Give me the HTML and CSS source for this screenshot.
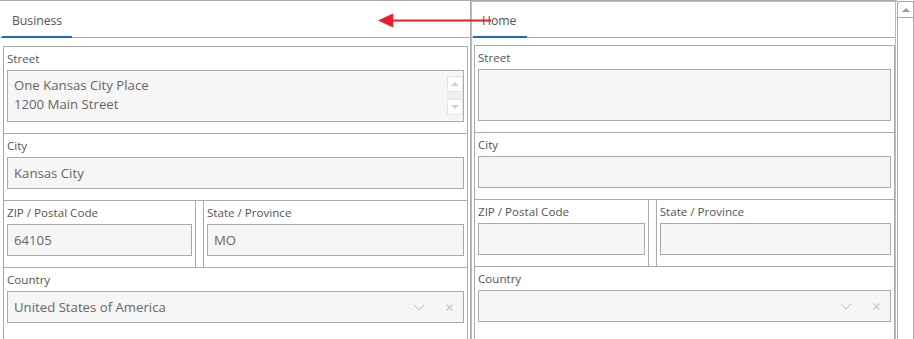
FILE: index.html
```html
<!DOCTYPE html>
<html lang="en">
<head>
    <meta charset="UTF-8">
    <meta name="viewport" content="width=device-width, initial-scale=1.0">
    <title>Address</title>
    <link rel="stylesheet" href="styles.css">
</head>
<body>
    <div class="editor">
        <div class="pane pane-left">
            <div class="tabs">
                <div class="tab">Business</div>
            </div>
            <div class="fields">
                <div class="field">
                    <div class="label">Street</div>
                    <div class="input textarea">
                        <div class="ta-text">One Kansas City Place<br>1200 Main Street</div>
                        <div class="spin">
                            <span class="spin-btn"><span class="tri up"></span></span>
                            <span class="spin-btn"><span class="tri down"></span></span>
                        </div>
                    </div>
                </div>
                <div class="field">
                    <div class="label">City</div>
                    <div class="input">Kansas City</div>
                </div>
                <div class="row">
                    <div class="field">
                        <div class="label">ZIP / Postal Code</div>
                        <div class="input">64105</div>
                    </div>
                    <div class="field">
                        <div class="label">State / Province</div>
                        <div class="input">MO</div>
                    </div>
                </div>
                <div class="field field-last">
                    <div class="label">Country</div>
                    <div class="input select">
                        <span class="select-value">United States of America</span>
                        <svg class="chevron" width="12" height="7" viewBox="0 0 12 7"><polyline points="0.5,0.5 6,6 11.5,0.5" fill="none" stroke="#bdbdbd" stroke-width="1"/></svg>
                        <svg class="clear" width="7" height="7" viewBox="0 0 7 7"><path d="M0.5 0.5 L6.5 6.5 M6.5 0.5 L0.5 6.5" stroke="#c4c4c4" stroke-width="1.2"/></svg>
                    </div>
                </div>
            </div>
        </div>

        <div class="pane pane-right">
            <div class="focus">
                <div class="tabs tabs-right">
                    <div class="tab tab-right">Home</div>
                </div>
                <div class="fields fields-right">
                    <div class="field">
                        <div class="label">Street</div>
                        <div class="input textarea"></div>
                    </div>
                    <div class="field">
                        <div class="label">City</div>
                        <div class="input"></div>
                    </div>
                    <div class="row">
                        <div class="field">
                            <div class="label">ZIP / Postal Code</div>
                            <div class="input"></div>
                        </div>
                        <div class="field">
                            <div class="label">State / Province</div>
                            <div class="input"></div>
                        </div>
                    </div>
                    <div class="field field-last">
                        <div class="label">Country</div>
                        <div class="input select">
                            <span class="select-value"></span>
                            <svg class="chevron" width="12" height="7" viewBox="0 0 12 7"><polyline points="0.5,0.5 6,6 11.5,0.5" fill="none" stroke="#bdbdbd" stroke-width="1"/></svg>
                            <svg class="clear" width="7" height="7" viewBox="0 0 7 7"><path d="M0.5 0.5 L6.5 6.5 M6.5 0.5 L0.5 6.5" stroke="#c4c4c4" stroke-width="1.2"/></svg>
                        </div>
                    </div>
                </div>
            </div>
        </div>

        <div class="scrollbar">
            <div class="sb-btn"><span class="tri up dark"></span></div>
        </div>

        <!-- annotation arrow drawn over the tabs -->
        <svg class="arrow" width="116" height="16" viewBox="0 0 116 16">
            <line x1="12" y1="7.5" x2="113" y2="7.5" stroke="#ec1c24" stroke-width="2"/>
            <polygon points="0,7.5 15,0.5 15,14.5" fill="#ec1c24"/>
        </svg>
    </div>
</body>
</html>
```

FILE: styles.css
```css
html, body {
    margin: 0;
    height: 339px;
    overflow: hidden;
    background: #fff;
}
body {
    font-family: "Open Sans", "Noto Sans", Arial, sans-serif;
    color: #555;
}
.editor {
    position: relative;
    display: flex;
    height: 420px;
}
.pane {
    border-top: 1px solid #aaa;
    box-sizing: border-box;
}
.pane-left {
    width: 470px;
}
.pane-right {
    width: 427px;
    border-left: 1px solid #aaa;
}
.focus {
    height: 100%;
    margin-right: 1px;
    border: 1px solid #86cdee;
    border-bottom: 0;
    box-sizing: border-box;
}
.tabs {
    display: flex;
    height: 36px;
    border-bottom: 1px solid #aaa;
}
.tabs-right {
    height: 35px;
}
.tab {
    box-sizing: border-box;
    height: 37px;
    margin: 0 0 -1px 2px;
    padding: 11px 10px 0 10px;
    border-bottom: 2px solid #1c6dc2;
    font-size: 12.2px;
    line-height: 18px;
    color: #555;
}
.tab-right {
    height: 36px;
    margin-left: 1px;
    padding: 10px 11px 0 9px;
}
.fields {
    margin: 8px 2px 0 3px;
}
.fields-right {
    margin: 7px 0 0 2px;
}
.fields > * + * {
    margin-top: -1px;
}
.field {
    border: 1px solid #aaa;
    padding: 3px 3px 11px;
}
.field-last {
    padding-bottom: 60px;
}
.label {
    font-size: 11.6px;
    line-height: 17px;
    margin-bottom: 3px;
    color: #555;
}
.row {
    display: grid;
    grid-template-columns: 41.5% 1fr;
    column-gap: 7px;
}
.input {
    box-sizing: border-box;
    height: 32px;
    border: 1px solid #aaa;
    background: #f6f6f6;
    padding: 0 7px 0 6px;
    font-size: 13.2px;
    line-height: 30px;
    color: #666;
}
.textarea {
    display: flex;
    height: 52px;
    padding: 0;
}
.ta-text {
    flex: 1;
    padding: 5px 6px;
    line-height: 19px;
}
.spin {
    display: flex;
    flex-direction: column;
    justify-content: space-between;
    width: 16px;
    height: 39px;
    margin: 5px 0 0;
    background: #efefef;
}
.spin-btn {
    display: flex;
    align-items: center;
    justify-content: center;
    box-sizing: border-box;
    width: 16px;
    height: 16px;
    background: #fff;
    border: 1px solid #e4e4e4;
}
.tri {
    width: 0;
    height: 0;
    border-left: 4px solid transparent;
    border-right: 4px solid transparent;
}
.tri.up {
    border-bottom: 4px solid #cfcfcf;
}
.tri.down {
    border-top: 4px solid #cfcfcf;
}
.tri.dark {
    border-bottom-color: #9a9a9a;
}
.select {
    display: flex;
    align-items: center;
}
.select-value {
    flex: 1;
}
.chevron {
    margin-right: 21px;
}
.clear {
    margin-right: 3px;
}
.scrollbar {
    box-sizing: border-box;
    width: 17px;
    margin-top: 1px;
    border-left: 1px solid #aaa;
    border-right: 1px solid #aaa;
}
.sb-btn {
    display: flex;
    align-items: center;
    justify-content: center;
    height: 15px;
    border-top: 1px solid #aaa;
    border-bottom: 1px solid #aaa;
}
.arrow {
    position: absolute;
    left: 378px;
    top: 13px;
}
```
